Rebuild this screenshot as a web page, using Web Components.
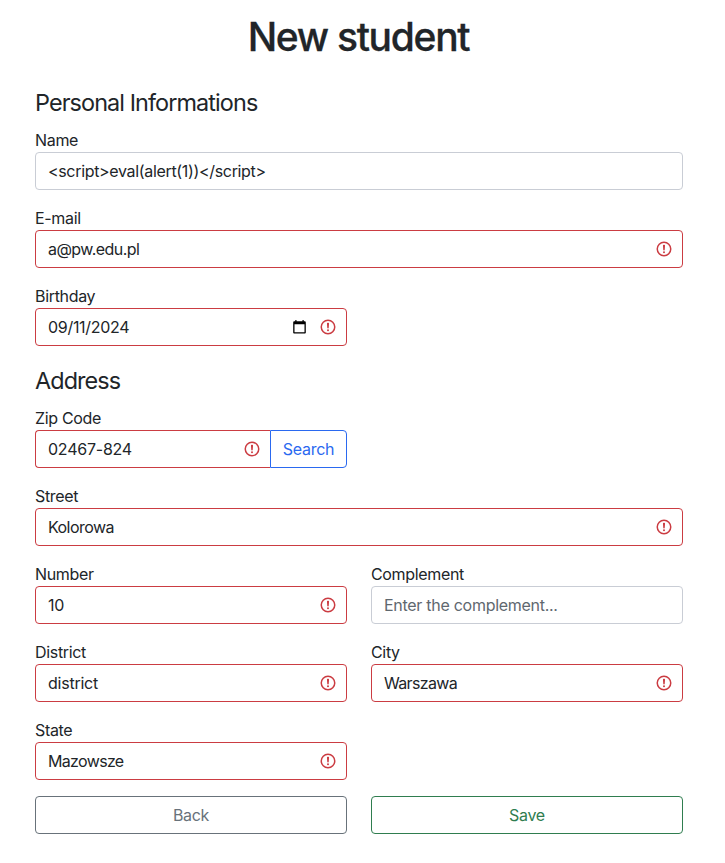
<!DOCTYPE html>
<html lang="en">
<head>
<meta charset="utf-8">
<title>New student</title>
<style>
html{background:#fff}
body{margin:0;color:#212529;font:16px/24px Inter,"Liberation Sans",sans-serif}
</style>
</head>
<body>
<student-form></student-form>
<script>
const sheet = ':host{box-sizing:border-box}*{box-sizing:border-box}';

class FormHeading extends HTMLElement {
  connectedCallback() {
    const page = this.getAttribute('level') === '1';
    this.attachShadow({mode: 'open'}).innerHTML = page
      ? `<style>${sheet}:host{display:block;text-align:center}h1{margin:0;font-size:39px;font-weight:500;line-height:48px;height:48px;letter-spacing:var(--ls,-1.3px);-webkit-text-stroke:.3px currentColor}</style><h1><slot></slot></h1>`
      : `<style>${sheet}:host{display:block;height:44px;padding-top:4px}h4{margin:0;font-size:23.4px;font-weight:400;line-height:30px;letter-spacing:var(--ls,-.9px)}</style><h4><slot></slot></h4>`;
  }
}
customElements.define('form-heading', FormHeading);

class ErrorIcon extends HTMLElement {
  connectedCallback() {
    this.attachShadow({mode: 'open'}).innerHTML = `
      <style>:host{display:block;width:18px;height:18px;flex:none;color:#cb3c42}svg{display:block}</style>
      <svg width="18" height="18" viewBox="0 0 12 12" fill="none" stroke="currentColor">
        <circle cx="6" cy="6" r="4.5"/><path stroke-linejoin="round" d="M5.8 3.6h.4L6 6.5z"/>
        <circle cx="6" cy="8.2" r=".65" fill="currentColor" stroke="none"/>
      </svg>`;
  }
}
customElements.define('error-icon', ErrorIcon);

class CalendarIcon extends HTMLElement {
  connectedCallback() {
    this.attachShadow({mode: 'open'}).innerHTML = `
      <style>:host{display:block;width:13px;height:14px;flex:none;color:#000}svg{display:block}</style>
      <svg width="13" height="14" viewBox="0 0 13 14" fill="currentColor">
        <path fill-rule="evenodd" d="M2.3 0h1.2v1.3h6V0h1.2v1.3h.9c.7 0 1.2.5 1.2 1.2v9.9c0 .7-.5 1.2-1.2 1.2H1.4c-.7 0-1.2-.5-1.2-1.2V2.5c0-.7.5-1.2 1.2-1.2h.9zM1.5 4.3v8h10v-8z"/>
      </svg>`;
  }
}
customElements.define('calendar-icon', CalendarIcon);

class FormField extends HTMLElement {
  connectedCallback() {
    const invalid = this.hasAttribute('invalid');
    this.attachShadow({mode: 'open'}).innerHTML = `
      <style>${sheet}
        :host{display:block;min-width:0}
        :host([wide]){grid-column:1/-1}
        .label{display:block;height:24px;letter-spacing:var(--label-ls,-.33px);white-space:nowrap}
        .group{display:flex}
        .control{flex:1;min-width:0;height:38px;display:flex;align-items:center;gap:13px;padding:0 9px 0 12px;border:1px solid #c9cdd5;border-radius:4px;background:#fff}
        :host([invalid]) .control{border-color:#cb3c42}
        :host([joined]) .control{border-right:0;border-radius:4px 0 0 4px}
        .value{flex:1;white-space:nowrap;letter-spacing:var(--value-ls,-.33px)}
        :host([placeholder]) .value{color:#5f686f}
      </style>
      <span class="label"></span>
      <div class="group"><div class="control"><span class="value"><slot></slot></span><slot name="icon"></slot>${invalid ? '<error-icon></error-icon>' : ''}</div><slot name="button"></slot></div>`;
    this.shadowRoot.querySelector('.label').textContent = this.getAttribute('label');
  }
}
customElements.define('form-field', FormField);

class OutlineButton extends HTMLElement {
  connectedCallback() {
    this.attachShadow({mode: 'open'}).innerHTML = `
      <style>${sheet}
        :host{display:block;color:#68727a}
        :host([kind=success]){color:#2f7d4f}
        :host([kind=primary]){color:#2a69f0;width:77px;flex:none}
        button{display:block;width:100%;height:38px;padding:0;font:inherit;line-height:24px;letter-spacing:var(--ls,-.3px);color:inherit;background:#fff;border:1px solid currentColor;border-radius:4px}
        :host([kind=primary]) button{border-radius:0 4px 4px 0}
      </style><button type="button"><slot></slot></button>`;
  }
}
customElements.define('outline-button', OutlineButton);

class FormGrid extends HTMLElement {
  connectedCallback() {
    this.attachShadow({mode: 'open'}).innerHTML = `
      <style>:host{display:grid;grid-template-columns:1fr 1fr;gap:16px 24px;margin-bottom:16px}</style><slot></slot>`;
  }
}
customElements.define('form-grid', FormGrid);

class StudentForm extends HTMLElement {
  connectedCallback() {
    this.attachShadow({mode: 'open'}).innerHTML = `
      <style>${sheet}
        :host{display:block;width:725px;padding:13px 42px 0 35px}
        form-heading[level="1"]{margin:0 1px 23px 0}
        .tight{--value-ls:-.55px}
        .tighter{--value-ls:-.66px}
        .loose{--value-ls:-.23px}
      </style>
      <form-heading level="1">New student</form-heading>
      <form-heading>Personal Informations</form-heading>
      <form-grid>
        <form-field wide label="Name">&lt;script&gt;eval(alert(1))&lt;/script&gt;</form-field>
        <form-field class="tight" wide invalid label="E-mail">a@pw.edu.pl</form-field>
        <form-field style="--value-ls:-.3px" invalid label="Birthday">09/11/2024<calendar-icon slot="icon"></calendar-icon></form-field>
      </form-grid>
      <form-heading>Address</form-heading>
      <form-grid>
        <form-field class="loose" invalid joined label="Zip Code">02467-824<outline-button slot="button" kind="primary">Search</outline-button></form-field>
        <form-field class="tight" wide invalid label="Street">Kolorowa</form-field>
        <form-field class="loose" invalid label="Number">10</form-field>
        <form-field style="--value-ls:-.28px" placeholder label="Complement">Enter the complement...</form-field>
        <form-field class="loose" invalid label="District">district</form-field>
        <form-field class="tighter" invalid label="City">Warszawa</form-field>
        <form-field class="tighter" invalid label="State">Mazowsze</form-field>
      </form-grid>
      <form-grid>
        <outline-button>Back</outline-button>
        <outline-button kind="success">Save</outline-button>
      </form-grid>`;
  }
}
customElements.define('student-form', StudentForm);
</script>
</body>
</html>
